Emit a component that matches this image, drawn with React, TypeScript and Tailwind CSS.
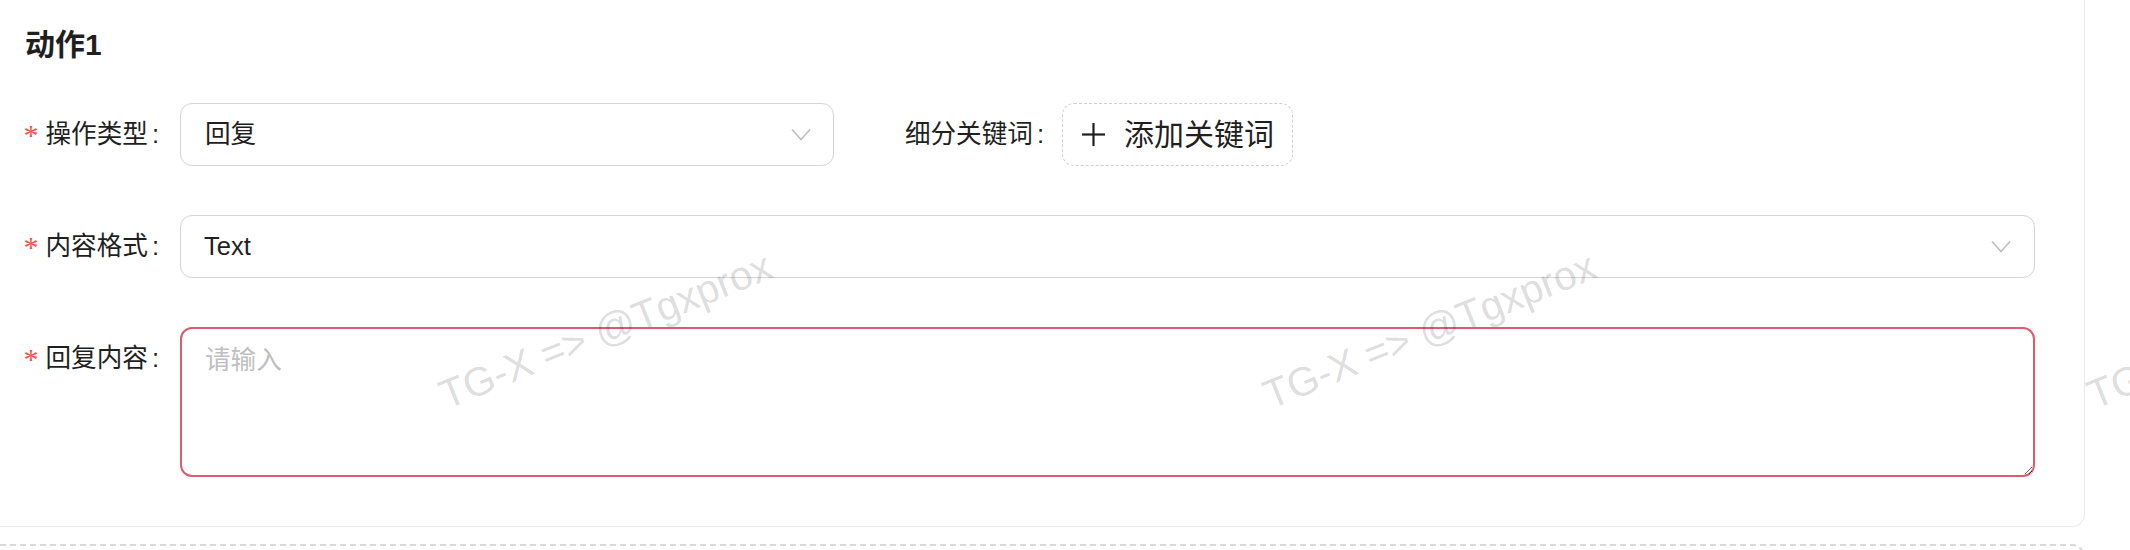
import React from "react";

function Chevron() {
  return (
    <svg width="20" height="13" viewBox="0 0 20 13" fill="none" className="shrink-0">
      <polyline points="1,1.5 10,11.5 19,1.5" stroke="#bfbfbf" strokeWidth="1.6" fill="none" />
    </svg>
  );
}

function Plus() {
  return (
    <svg width="25" height="25" viewBox="0 0 25 25" fill="none" className="shrink-0">
      <line x1="12.5" y1="1" x2="12.5" y2="24" stroke="#1f1f1f" strokeWidth="2.2" />
      <line x1="1" y1="12.5" x2="24" y2="12.5" stroke="#1f1f1f" strokeWidth="2.2" />
    </svg>
  );
}

function Label({ text }: { text: string }) {
  return (
    <div className="w-[180px] h-[63px] shrink-0 flex justify-end items-center pr-[21px] text-[25.6px] leading-none">
      <span className="text-[#ff4d4f] font-['Liberation_Serif',serif] text-[30px] mr-[7px] relative top-[0px]">*</span>
      <span>{text}</span>
      <span className="ml-[4px]">:</span>
    </div>
  );
}

export default function App() {
  return (
    <div className="relative w-[2130px] h-[550px] overflow-hidden bg-white font-['Liberation_Sans','Noto_Sans_CJK_SC',sans-serif] text-[#1f1f1f]">
      <div className="pr-[45px]">
        <div className="border-r border-b border-[#ebebeb] rounded-br-[13px] pt-[23px] pb-[49px]">
          <div className="pl-[25px] h-[44px] flex items-center text-[30px] font-semibold leading-none">动作1</div>
          <div className="mt-[36px] flex flex-col gap-[49px]">
            <div className="flex items-center h-[63px]">
              <Label text="操作类型" />
              <div className="w-[654px] h-[63px] shrink-0 border border-[#d4d4d4] rounded-[12px] flex items-center justify-between pl-[24px] pr-[22px] text-[25.6px] leading-none">
                <span>回复</span>
                <Chevron />
              </div>
              <div className="w-[228px] shrink-0 flex justify-end items-center pr-[18px] text-[25.6px] leading-none">
                <span>细分关键词</span>
                <span className="ml-[4px]">:</span>
              </div>
              <div className="w-[231px] h-[63px] shrink-0 border border-dashed border-[#cfcfcf] rounded-[12px] flex items-center justify-center gap-[18px] text-[30px] leading-none">
                <Plus />
                <span>添加关键词</span>
              </div>
            </div>
            <div className="flex items-center h-[63px]">
              <Label text="内容格式" />
              <div className="w-[1855px] h-[63px] shrink-0 border border-[#d4d4d4] rounded-[12px] flex items-center justify-between pl-[23px] pr-[23px] text-[25.6px] leading-none">
                <span>Text</span>
                <Chevron />
              </div>
            </div>
            <div className="flex items-start">
              <Label text="回复内容" />
              <textarea
                placeholder="请输入"
                className="w-[1855px] h-[150px] shrink-0 border-2 border-[#de5a6d] rounded-[12px] px-[23px] py-[12px] text-[25.6px] leading-[38px] text-[#1f1f1f] placeholder:text-[#bfbfbf] outline-none resize-y bg-white font-['Liberation_Sans','Noto_Sans_CJK_SC',sans-serif]"
              />
            </div>
          </div>
        </div>
        <div className="mt-[17px] h-[40px] border-t-2 border-r-2 border-dashed border-[#d9d9d9] rounded-tr-[13px]" />
      </div>
      <div className="pointer-events-none absolute inset-0">
        <span className="absolute left-[449px] top-[375px] origin-bottom-left -rotate-[22deg] whitespace-nowrap text-[40.5px] leading-none text-[rgba(0,0,0,0.15)] font-['Liberation_Sans',sans-serif]">TG-X =&gt; @Tgxprox</span>
        <span className="absolute left-[1273px] top-[375px] origin-bottom-left -rotate-[22deg] whitespace-nowrap text-[40.5px] leading-none text-[rgba(0,0,0,0.15)] font-['Liberation_Sans',sans-serif]">TG-X =&gt; @Tgxprox</span>
        <span className="absolute left-[2097px] top-[375px] origin-bottom-left -rotate-[22deg] whitespace-nowrap text-[40.5px] leading-none text-[rgba(0,0,0,0.15)] font-['Liberation_Sans',sans-serif]">TG-X =&gt; @Tgxprox</span>
      </div>
    </div>
  );
}
